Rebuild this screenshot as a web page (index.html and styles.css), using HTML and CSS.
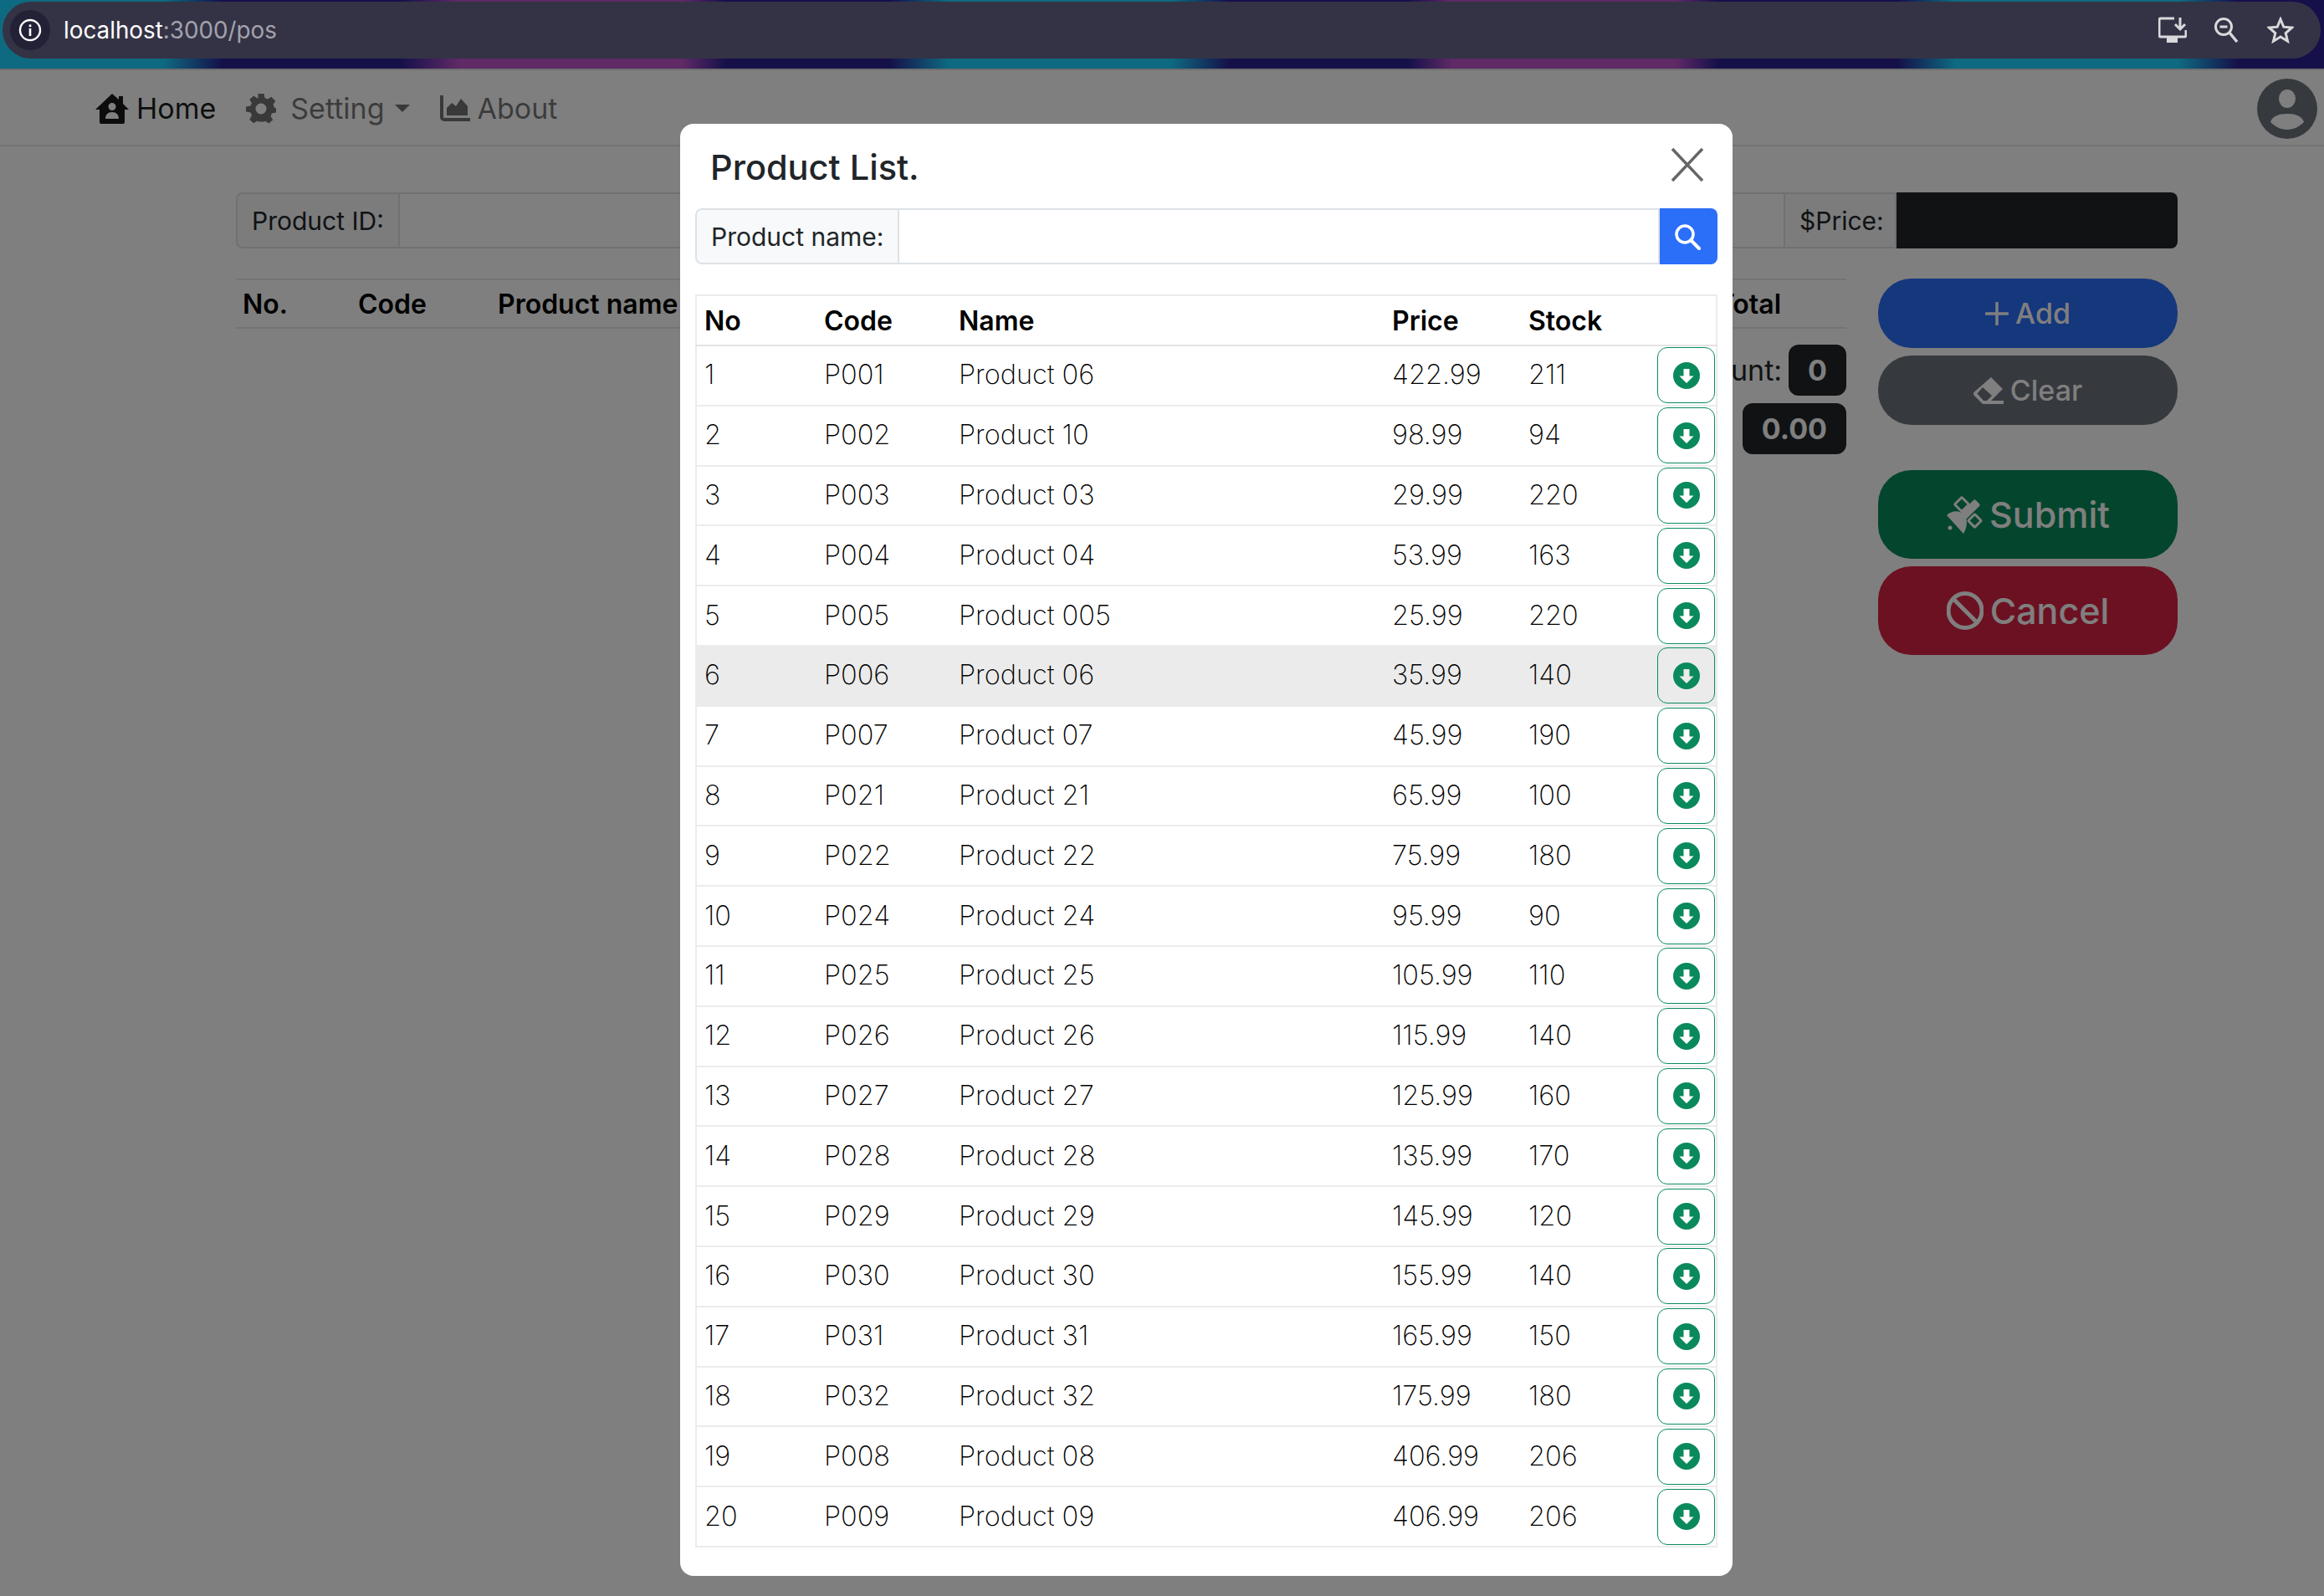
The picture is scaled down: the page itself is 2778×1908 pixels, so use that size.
FILE: index.html
```html
<!DOCTYPE html>
<html lang="en">
<head>
    <meta charset="UTF-8">
    <title>POS</title>
    <link rel="stylesheet" href="styles.css">
</head>
<body>

<svg class="sprites" width="0" height="0">
    <symbol id="i-down" viewBox="0 0 32 32">
        <path fill-rule="evenodd" d="M16 0a16 16 0 1 1 0 32a16 16 0 0 1 0-32zM12.500 8v8.500H7.500L16 25l8.500-8.500h-5V8z"/>
    </symbol>
</svg>

<header class="chrome">
    <div class="urlbar">
        <span class="site-info">
            <svg class="site-icon" viewBox="0 0 28 28"><circle cx="14" cy="14" r="12" fill="none" stroke="#fff" stroke-width="2.400"/><rect x="12.700" y="12" width="2.600" height="9" fill="#fff"/><rect x="12.700" y="7.400" width="2.600" height="2.800" fill="#fff"/></svg>
        </span>
        <span class="url">localhost<span class="url-dim">:3000/pos</span></span>
        <span class="url-actions">
            <svg class="act-install" viewBox="0 0 34 32"><path d="M19 2H3a2 2 0 0 0-2 2v18a2 2 0 0 0 2 2h28a2 2 0 0 0 2-2v-6" fill="none" stroke="#d9d9dc" stroke-width="3"/><rect x="10" y="25" width="13" height="6" fill="#d9d9dc"/><path d="M26 1v13M20 9l6 6l6-6" fill="none" stroke="#d9d9dc" stroke-width="3"/></svg>
            <svg class="act-zoom" viewBox="0 0 30 32"><circle cx="12" cy="12" r="9.500" fill="none" stroke="#d9d9dc" stroke-width="3"/><path d="M7.500 12h9" stroke="#d9d9dc" stroke-width="3"/><path d="M19 19l9 11" stroke="#d9d9dc" stroke-width="3.400"/></svg>
            <svg class="act-star" viewBox="0 0 32 32"><path d="M16 3l3.800 9.200l9.900.8l-7.500 6.500l2.300 9.700L16 24l-8.500 5.200l2.300-9.700L2.300 13l9.900-.8z" fill="none" stroke="#d9d9dc" stroke-width="3"/></svg>
        </span>
    </div>
</header>

<div class="page">
    <nav class="navbar">
        <a class="nav-link active">
            <svg class="nav-icon home-icon" viewBox="0 0 40 36"><path fill-rule="evenodd" d="M20 0l8 7V3h5v9l7 7h-5v15a2 2 0 0 1-2 2H7a2 2 0 0 1-2-2V19H0zM20 11a4.500 4.500 0 1 0 0 9a4.500 4.500 0 0 0 0-9zM12 30h16c0-5-3-8-8-8s-8 3-8 8z"/></svg>
            Home
        </a>
        <a class="nav-link">
            <svg class="nav-icon gear-icon" viewBox="0 0 36 36"><path fill-rule="evenodd" d="M14.500 0h7l1 5l3.500 1.500l4.300-2.800l5 5l-2.800 4.300L34 16.500l2 1v5l-5 1l-1.500 3.500l2.800 4.300l-5 4.300l-4.300-2.800l-1.500.7H14.500l-1-1l-4.300 2.800l-5-4.300L7 26L5.500 22.500L0 21.500v-6l5.500-1L7 11L4.200 7l5-4.500l4.300 3L14.500 5zM18 11.500a6.500 6.500 0 1 0 0 13a6.500 6.500 0 0 0 0-13z"/></svg>
            Setting
            <span class="caret"></span>
        </a>
        <a class="nav-link">
            <svg class="nav-icon chart-icon" viewBox="0 0 36 32"><path d="M2 0v26a3 3 0 0 0 3 3h31" fill="none" stroke="currentColor" stroke-width="4"/><path d="M8 24V15l6-6l5 4l6-9l8 9v11z" fill="currentColor"/></svg>
            About
        </a>
        <span class="avatar">
            <svg viewBox="0 0 72 72"><circle cx="36" cy="36" r="36" fill="#6c757d"/><ellipse cx="36" cy="24" rx="10" ry="11" fill="#fff"/><path d="M16 52c2-7 10-10 20-10s18 3 20 10c-5 5-12 9-20 9s-15-4-20-9z" fill="#fff"/></svg>
        </span>
    </nav>

    <main class="pos">
        <div class="input-group top-group">
            <span class="input-label">Product ID:</span>
            <span class="input-field id-field"></span>
            <span class="blue-btn"></span>
            <span class="input-field grow"></span>
            <span class="input-label price-label">$Price:</span>
            <span class="price-field"></span>
        </div>

        <div class="pos-body">
            <section class="cart">
                <div class="cart-head">
                    <span class="col-no">No.</span>
                    <span class="col-code">Code</span>
                    <span class="col-name">Product name</span>
                    <span class="col-total">Total</span>
                </div>
                <div class="sum-row first">Amount: <span class="badge">0</span></div>
                <div class="sum-row">Total: <span class="badge wide">0.00</span></div>
            </section>

            <aside class="actions">
                <button class="pill small blue">
                    <svg class="pill-icon plus" viewBox="0 0 28 28"><path d="M14 1v26M1 14h26" stroke="currentColor" stroke-width="3.500" stroke-linecap="round"/></svg>
                    Add
                </button>
                <button class="pill small gray">
                    <svg class="pill-icon eraser" viewBox="0 0 36 32"><path fill-rule="evenodd" d="M21 0l14 14L21 28H36v4H11L1 22c-1.500-1.500-1.500-3 0-4.500zM11 12L4.500 19.500L12 28h4l6-6z"/></svg>
                    Clear
                </button>
                <button class="pill big green">
                    <svg class="pill-icon satellite" viewBox="0 0 44 45">
                        <rect x="13" y="4" width="12" height="12" rx="1" transform="rotate(45 19 10)" fill="none" stroke="currentColor" stroke-width="3"/>
                        <rect x="29" y="24" width="11" height="11" rx="1" transform="rotate(45 34.500 29.500)" fill="none" stroke="currentColor" stroke-width="3"/>
                        <rect x="15" y="12" width="27" height="10" rx="2" transform="rotate(-45 28 17)"/>
                        <path d="M1 23C7 17 16 17 22 22C26 28 26 37 21 45z"/>
                        <circle cx="5" cy="38" r="2.500"/>
                    </svg>
                    Submit
                </button>
                <button class="pill big red">
                    <svg class="pill-icon ban" viewBox="0 0 44 50"><ellipse cx="22" cy="25" rx="20" ry="20.500" fill="none" stroke="currentColor" stroke-width="5"/><path d="M8 11l28 28" stroke="currentColor" stroke-width="5"/></svg>
                    Cancel
                </button>
            </aside>
        </div>
    </main>

    <div class="backdrop">
        <div class="modal">
            <div class="modal-header">
                <h2 class="modal-title">Product List.</h2>
                <svg class="btn-close" viewBox="0 0 40 42"><path d="M2 2l36 38M38 2L2 40" stroke="#666" stroke-width="3.500"/></svg>
            </div>

            <div class="input-group search-group">
                <span class="input-label">Product name:</span>
                <span class="input-field grow"></span>
                <button class="search-btn">
                    <svg viewBox="0 0 32 32"><circle cx="13" cy="13" r="10" fill="none" stroke="#fff" stroke-width="3.500"/><path d="M20 20l10 10" stroke="#fff" stroke-width="4" stroke-linecap="round"/></svg>
                </button>
            </div>

            <table class="products">
                <colgroup>
                    <col class="w-no"><col class="w-code"><col class="w-name"><col class="w-price"><col class="w-stock"><col>
                </colgroup>
                <thead>
                    <tr><th>No</th><th>Code</th><th>Name</th><th>Price</th><th>Stock</th><th></th></tr>
                </thead>
                <tbody>
                    <tr><td>1</td><td>P001</td><td>Product 06</td><td>422.99</td><td>211</td><td><button class="pick"><svg><use href="#i-down"/></svg></button></td></tr>
                    <tr><td>2</td><td>P002</td><td>Product 10</td><td>98.99</td><td>94</td><td><button class="pick"><svg><use href="#i-down"/></svg></button></td></tr>
                    <tr><td>3</td><td>P003</td><td>Product 03</td><td>29.99</td><td>220</td><td><button class="pick"><svg><use href="#i-down"/></svg></button></td></tr>
                    <tr><td>4</td><td>P004</td><td>Product 04</td><td>53.99</td><td>163</td><td><button class="pick"><svg><use href="#i-down"/></svg></button></td></tr>
                    <tr><td>5</td><td>P005</td><td>Product 005</td><td>25.99</td><td>220</td><td><button class="pick"><svg><use href="#i-down"/></svg></button></td></tr>
                    <tr class="hover"><td>6</td><td>P006</td><td>Product 06</td><td>35.99</td><td>140</td><td><button class="pick"><svg><use href="#i-down"/></svg></button></td></tr>
                    <tr><td>7</td><td>P007</td><td>Product 07</td><td>45.99</td><td>190</td><td><button class="pick"><svg><use href="#i-down"/></svg></button></td></tr>
                    <tr><td>8</td><td>P021</td><td>Product 21</td><td>65.99</td><td>100</td><td><button class="pick"><svg><use href="#i-down"/></svg></button></td></tr>
                    <tr><td>9</td><td>P022</td><td>Product 22</td><td>75.99</td><td>180</td><td><button class="pick"><svg><use href="#i-down"/></svg></button></td></tr>
                    <tr><td>10</td><td>P024</td><td>Product 24</td><td>95.99</td><td>90</td><td><button class="pick"><svg><use href="#i-down"/></svg></button></td></tr>
                    <tr><td>11</td><td>P025</td><td>Product 25</td><td>105.99</td><td>110</td><td><button class="pick"><svg><use href="#i-down"/></svg></button></td></tr>
                    <tr><td>12</td><td>P026</td><td>Product 26</td><td>115.99</td><td>140</td><td><button class="pick"><svg><use href="#i-down"/></svg></button></td></tr>
                    <tr><td>13</td><td>P027</td><td>Product 27</td><td>125.99</td><td>160</td><td><button class="pick"><svg><use href="#i-down"/></svg></button></td></tr>
                    <tr><td>14</td><td>P028</td><td>Product 28</td><td>135.99</td><td>170</td><td><button class="pick"><svg><use href="#i-down"/></svg></button></td></tr>
                    <tr><td>15</td><td>P029</td><td>Product 29</td><td>145.99</td><td>120</td><td><button class="pick"><svg><use href="#i-down"/></svg></button></td></tr>
                    <tr><td>16</td><td>P030</td><td>Product 30</td><td>155.99</td><td>140</td><td><button class="pick"><svg><use href="#i-down"/></svg></button></td></tr>
                    <tr><td>17</td><td>P031</td><td>Product 31</td><td>165.99</td><td>150</td><td><button class="pick"><svg><use href="#i-down"/></svg></button></td></tr>
                    <tr><td>18</td><td>P032</td><td>Product 32</td><td>175.99</td><td>180</td><td><button class="pick"><svg><use href="#i-down"/></svg></button></td></tr>
                    <tr><td>19</td><td>P008</td><td>Product 08</td><td>406.99</td><td>206</td><td><button class="pick"><svg><use href="#i-down"/></svg></button></td></tr>
                    <tr><td>20</td><td>P009</td><td>Product 09</td><td>406.99</td><td>206</td><td><button class="pick"><svg><use href="#i-down"/></svg></button></td></tr>
                </tbody>
            </table>
        </div>
    </div>
</div>

</body>
</html>
```

FILE: styles.css
```css
* {
    box-sizing: border-box;
}
body {
    margin: 0;
    height: 100vh;
    overflow: hidden;
    display: flex;
    flex-direction: column;
    font-family: Inter, "Noto Sans", sans-serif;
    font-size: 32px;
    color: #212529;
    background: #fff;
}
.sprites {
    position: absolute;
}

/* browser bar */
.chrome {
    height: 84px;
    flex: none;
    padding: 2px 4px 14px 3px;
    border-bottom: 2px solid #6f6f6f;
    background: linear-gradient(90deg, #0e6a80 0, #0e6a80 195px, #15104a 266px, #15104a 478px, #5f2a66 549px, #5f2a66 815px, #15104a 868px, #15104a 1063px, #0e6a80 1134px, #0e6a80 1400px, #15104a 1470px, #15104a 1683px, #5f2a66 1736px, #5f2a66 2002px, #15104a 2055px, #15104a 2268px, #0e6a80 2338px, #0e6a80 2604px, #15104a 2675px);
}
.urlbar {
    height: 68px;
    display: flex;
    align-items: center;
    padding: 0 32px 0 9px;
    border-radius: 34px;
    background: #343345;
    color: #fff;
}
.site-info {
    width: 48px;
    height: 48px;
    display: flex;
    align-items: center;
    justify-content: center;
    border-radius: 50%;
    background: #222136;
}
.site-icon {
    width: 28px;
    height: 28px;
}
.url {
    margin-left: 16px;
    font-size: 27.800px;
}
.url-dim {
    color: #a3a2ae;
}
.url-actions {
    margin-left: auto;
    display: flex;
    align-items: center;
}
.act-install {
    width: 34px;
    height: 32px;
}
.act-zoom {
    width: 30px;
    height: 32px;
    margin-left: 32px;
}
.act-star {
    width: 32px;
    height: 32px;
    margin-left: 34px;
}

/* page under the modal */
.page {
    position: relative;
    flex: 1;
}
.navbar {
    height: 91px;
    display: flex;
    align-items: center;
    padding: 2px 8px 0 114px;
    border-bottom: 2px solid #e8e8e8;
    font-size: 34px;
}
.nav-link {
    display: flex;
    align-items: center;
    margin-right: 36px;
    color: rgba(0, 0, 0, 0.55);
}
.nav-link.active {
    color: rgba(0, 0, 0, 0.9);
}
.nav-icon {
    fill: currentColor;
    margin-right: 9px;
}
.home-icon {
    width: 40px;
    height: 36px;
}
.gear-icon {
    width: 36px;
    height: 36px;
    margin-right: 17px;
}
.chart-icon {
    width: 36px;
    height: 32px;
}
.caret {
    margin-left: 12px;
    border-top: 9px solid currentColor;
    border-left: 9px solid transparent;
    border-right: 9px solid transparent;
}
.avatar {
    margin-left: auto;
    width: 72px;
    height: 72px;
}
.avatar svg {
    display: block;
}

.pos {
    padding: 55px 175px 0 282px;
}
.input-group {
    display: flex;
    height: 67px;
    font-size: 30px;
}
.input-label {
    display: flex;
    align-items: center;
    padding: 0 17px;
    border: 2px solid #dee2e6;
    border-radius: 8px 0 0 8px;
    background: #f8f9fa;
}
.input-field {
    border: 2px solid #dee2e6;
    border-left: none;
}
.input-field.grow {
    flex: 1;
}
.id-field {
    width: 338px;
}
.blue-btn {
    width: 110px;
    background: #2b6ef8;
}
.price-label {
    width: 133px;
    border-radius: 0;
    border-left: none;
}
.price-field {
    width: 336px;
    border-radius: 0 8px 8px 0;
    background: #212529;
}
.pos-body {
    display: flex;
    margin-top: 36px;
}
.cart {
    width: 1925px;
    margin-right: 38px;
}
.cart-head {
    display: flex;
    align-items: center;
    height: 60px;
    border-top: 2px solid #e8e8e8;
    border-bottom: 2px solid #e8e8e8;
    color: #000;
    font-weight: 600;
}
.col-no {
    margin-left: 8px;
    width: 138px;
}
.col-code {
    width: 167px;
}
.col-total {
    margin-left: auto;
    margin-right: 78px;
}
.sum-row {
    display: flex;
    justify-content: flex-end;
    align-items: center;
    margin-top: 9px;
    height: 61px;
    font-size: 34px;
}
.sum-row.first {
    margin-top: 19px;
}
.badge {
    margin-left: 8px;
    padding: 0 23px;
    height: 61px;
    display: flex;
    align-items: center;
    border-radius: 12px;
    background: #212529;
    color: #fff;
    font-weight: 700;
}
.badge.wide {
    margin-left: 18px;
}
.actions {
    width: 358px;
    display: flex;
    flex-direction: column;
}
.pill {
    display: flex;
    align-items: center;
    justify-content: center;
    border: none;
    border-radius: 40px;
    color: #fff;
    font-family: inherit;
    font-weight: 500;
}
.pill.small {
    height: 83px;
    margin-bottom: 9px;
    font-size: 34px;
}
.pill.big {
    height: 106px;
    margin-bottom: 9px;
    font-size: 43px;
}
.blue {
    background: #2b6ef8;
}
.gray {
    background: #6c727c;
    margin-bottom: 54px !important;
}
.green {
    background: #098b5a;
}
.red {
    background: #d82345;
}
.pill-icon {
    margin-right: 8px;
    fill: currentColor;
}
.plus {
    width: 28px;
    height: 28px;
}
.eraser {
    width: 36px;
    height: 32px;
}
.satellite {
    width: 44px;
    height: 45px;
}
.ban {
    width: 44px;
    height: 50px;
}

/* modal */
.backdrop {
    position: absolute;
    inset: 0;
    display: flex;
    justify-content: center;
    padding: 64px 0 0 106px;
    background: rgba(0, 0, 0, 0.5);
}
.modal {
    width: 1258px;
    height: 1736px;
    padding: 0 18px;
    border-radius: 16px;
    background: #fff;
}
.modal-header {
    height: 101px;
    display: flex;
    align-items: center;
    justify-content: space-between;
    padding: 2px 16px 0 18px;
}
.modal-title {
    margin: 0;
    font-size: 41.500px;
    font-weight: 500;
}
.btn-close {
    width: 40px;
    height: 42px;
    margin-bottom: 6px;
}
.search-btn {
    width: 69px;
    padding: 0 17px;
    border: none;
    border-radius: 0 8px 8px 0;
    background: #2b6ef8;
}
.search-btn svg {
    display: block;
    width: 32px;
    height: 32px;
}
.products {
    width: 1222px;
    margin-top: 36px;
    table-layout: fixed;
    border-collapse: collapse;
    border: 2px solid #ececec;
    color: #000;
}
.w-no {
    width: 144px;
}
.w-code {
    width: 161px;
}
.w-name {
    width: 518px;
}
.w-price {
    width: 163px;
}
.w-stock {
    width: 150px;
}
.products th {
    height: 60px;
    padding: 0 9px;
    text-align: left;
    font-weight: 600;
    border-bottom: 2px solid #e3e3e3;
}
.products td {
    height: 71.800px;
    padding: 0 9px 2px;
    font-size: 32.500px;
    font-weight: 200;
    border-bottom: 2px solid #ececec;
}
.products td:last-child {
    padding: 0 1px 0 0;
    text-align: right;
}
.products .hover td {
    background: #ebebeb;
}
.pick {
    width: 69px;
    height: 67px;
    padding: 0;
    vertical-align: middle;
    border: 1.500px solid #0a8a5c;
    border-radius: 12px;
    background: transparent;
}
.pick svg {
    display: block;
    width: 32px;
    height: 32px;
    margin: 0 auto;
    fill: #0a8a5c;
}
```
